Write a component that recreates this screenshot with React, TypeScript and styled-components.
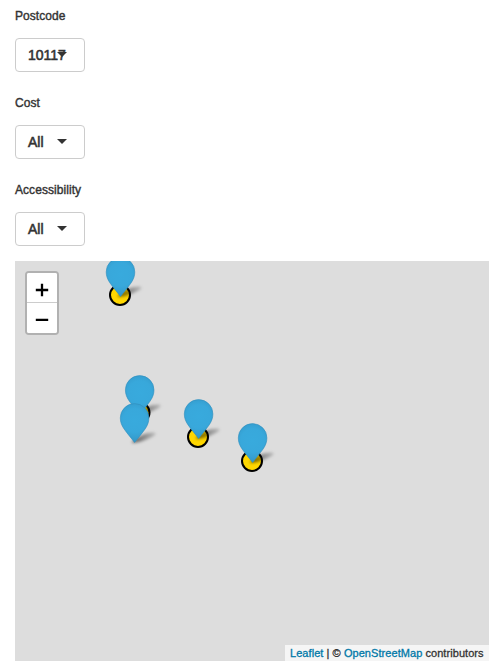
import React from "react";
import styled, { createGlobalStyle } from "styled-components";

const GlobalStyle = createGlobalStyle`
  *, *::before, *::after { box-sizing: border-box; }
  body {
    margin: 0;
    overflow: hidden;
    background: #fff;
    color: #333;
    font-family: "Liberation Sans", Arial, sans-serif;
  }
`;

const Page = styled.main`
  width: 504px;
  height: 661px;
  padding: 6px 15px 0;
  display: flex;
  flex-direction: column;
`;

const Field = styled.div`
  height: 87px;
  flex: none;
  display: flex;
  flex-direction: column;
  align-items: flex-start;

  &:nth-of-type(3) { height: 81px; }
`;

const Label = styled.label`
  height: 20px;
  margin-bottom: 12px;
  font-size: 12px;
  line-height: 20px;
  letter-spacing: 0.06px;
  white-space: nowrap;
  -webkit-text-stroke: 0.4px #333;
`;

const SelectButton = styled.button`
  width: 70px;
  height: 34px;
  padding: 0 12px;
  display: grid;
  grid-template-columns: 29px 10px;
  align-items: center;
  border: 1px solid #ccc;
  border-radius: 4px;
  background: #fff;
  color: #333;
  font: 14px/20px "Liberation Sans", Arial, sans-serif;
  text-align: left;
  -webkit-text-stroke: 0.55px #333;
`;

const Value = styled.span`
  white-space: nowrap;
`;

const Caret = styled.span`
  width: 10px;
  height: 5px;
  margin-top: -1px;
  border: 5px solid transparent;
  border-top-color: #333;
  border-bottom: 0;
`;

const Map = styled.section`
  position: relative;
  width: 474px;
  height: 400px;
  flex: none;
  overflow: hidden;
  background: #ddd;
`;

const Markers = styled.svg`
  position: absolute;
  inset: 0;
  width: 474px;
  height: 400px;
`;

const Zoom = styled.div`
  position: absolute;
  top: 10px;
  left: 10px;
  width: 34px;
  height: 64px;
  display: flex;
  flex-direction: column;
  border: 2px solid #b1b1b1;
  border-radius: 4px;
  background: #fff;
  overflow: hidden;
`;

const ZoomButton = styled.button`
  height: 30px;
  flex: none;
  padding: 0;
  border: 0;
  background: #fff;
  display: grid;
  place-items: center;

  &:first-child {
    border-bottom: 1px solid #ccc;
  }
`;

const ZoomIcon = styled.svg`
  width: 14px;
  height: 14px;
  overflow: visible;
  fill: none;
  stroke: #000;
  stroke-width: 2.3;
`;

const Attribution = styled.div`
  position: absolute;
  right: 0;
  bottom: 0;
  width: 204px;
  height: 16px;
  padding: 0 5px;
  background: rgba(255, 255, 255, 0.7);
  font-size: 11px;
  line-height: 16px;
  letter-spacing: 0.06px;
  white-space: nowrap;
  -webkit-text-stroke: 0.3px currentColor;
`;

const Link = styled.a`
  color: #0078a8;
  text-decoration: none;
`;

const filters = [
  { label: "Postcode", value: "10117" },
  { label: "Cost", value: "All" },
  { label: "Accessibility", value: "All" },
];

const stops = [
  { x: 105, y: 34 },
  { x: 124.5, y: 151.5 },
  { x: 183, y: 176 },
  { x: 237, y: 200 },
];

const pins = [
  { x: 105.5, y: 35.5 },
  { x: 124.7, y: 153.5 },
  { x: 183.6, y: 177.5 },
  { x: 237.6, y: 201.5 },
  { x: 119.6, y: 181.5 },
];

export default function App() {
  return (
    <>
      <GlobalStyle />
      <Page>
        {filters.map((f) => (
          <Field key={f.label}>
            <Label>{f.label}</Label>
            <SelectButton type="button">
              <Value>{f.value}</Value>
              <Caret />
            </SelectButton>
          </Field>
        ))}
        <Map>
          <Markers viewBox="0 0 474 400">
            <defs>
              <radialGradient id="pin" gradientUnits="userSpaceOnUse" cx="0" cy="-22" r="26">
                <stop offset="0" stopColor="#38aadd" />
                <stop offset="0.45" stopColor="#38a8db" />
                <stop offset="1" stopColor="#318fbe" />
              </radialGradient>
              <linearGradient id="shade" x1="0" x2="1">
                <stop offset="0" stopColor="#000" stopOpacity="0.6" />
                <stop offset="1" stopColor="#000" stopOpacity="0.15" />
              </linearGradient>
              <filter id="blur" x="-30%" y="-60%" width="160%" height="220%">
                <feGaussianBlur stdDeviation="1.4" />
              </filter>
            </defs>
            {stops.map((s) => (
              <circle key={s.x} cx={s.x} cy={s.y} r="10" fill="#ffd700" stroke="#000" strokeWidth="2" />
            ))}
            {pins.map((p) => (
              <path
                key={p.x}
                transform={`translate(${p.x} ${p.y})`}
                d="M-3 0C1-5 10-10 19-10C24-9 19-6 14-4C9-2 4 1 -3 0Z"
                fill="url(#shade)"
                filter="url(#blur)"
              />
            ))}
            {pins.map((p) => (
              <path
                key={p.x}
                transform={`translate(${p.x} ${p.y})`}
                d="M0 0C-3-4-7-8.500-10.500-13.500C-13-17.200-14.300-20.500-14.300-24.600A14.300 14.300 0 0 1 14.300-24.600C14.300-20.500 13-17.200 10.500-13.500C7-8.500 3-4 0 0Z"
                fill="url(#pin)"
                stroke="#318fbe"
                strokeWidth="0.6"
              />
            ))}
          </Markers>
          <Zoom>
            <ZoomButton type="button" aria-label="Zoom in">
              <ZoomIcon viewBox="0 0 14 14">
                <path d="M0.800 9H13.200M7 2.800V15.200" />
              </ZoomIcon>
            </ZoomButton>
            <ZoomButton type="button" aria-label="Zoom out">
              <ZoomIcon viewBox="0 0 14 14">
                <path d="M0.800 8.800H13.200" />
              </ZoomIcon>
            </ZoomButton>
          </Zoom>
          <Attribution>
            <Link>Leaflet</Link> | © <Link>OpenStreetMap</Link> contributors
          </Attribution>
        </Map>
      </Page>
    </>
  );
}
